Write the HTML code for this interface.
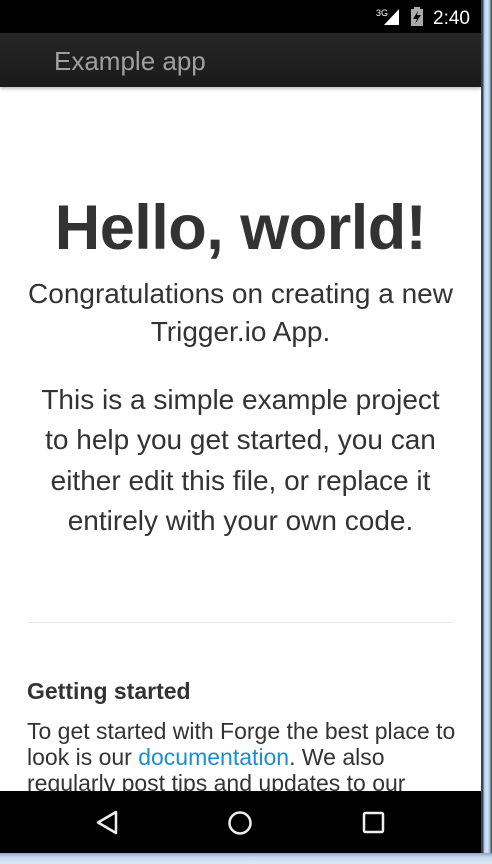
<!DOCTYPE html>
<html><head><meta charset="utf-8"><style>
html,body{margin:0;padding:0;width:492px;height:864px;overflow:hidden;background:#6a7f99;font-family:"Liberation Sans",sans-serif;}
#screen{position:absolute;left:0;top:0;width:481px;height:853px;background:#fff;overflow:hidden;}
#frame{position:absolute;left:481px;top:0;width:11px;height:864px;background:linear-gradient(90deg,#3a4452 0,#3a4452 2px,#aac8e8 3px,#d8e8f8 6px,#9fbbd8 9px,#555 10px);}
#bframe{position:absolute;left:0;top:853px;width:492px;height:11px;background:linear-gradient(180deg,#8aa6c6,#c8daf0 40%,#dfe8f2);}
.status{position:absolute;left:0;top:0;width:481px;height:33px;background:#000;}
.appbar{position:absolute;left:0;top:33px;width:481px;height:54px;background:linear-gradient(#262626,#1a1a1a);box-shadow:0 2px 3px rgba(0,0,0,.25);}
.appbar span{position:absolute;left:54px;top:13px;font-size:26px;color:#a0a0a0;}
.l{position:absolute;left:0;width:481px;text-align:center;color:#333;white-space:nowrap;}
.b{position:absolute;left:27px;color:#333;font-size:23px;white-space:nowrap;}
.nav{position:absolute;left:0;top:791px;width:481px;height:62px;background:#000;}
</style></head><body>
<div id="screen">
<div class="l" style="top:192px;font-size:63px;font-weight:bold;line-height:72px;letter-spacing:-0.5px">Hello, world!</div>
<div class="l" style="top:279px;font-size:28px;line-height:30px">Congratulations on creating a new</div>
<div class="l" style="top:317px;font-size:28px;line-height:30px">Trigger.io App.</div>
<div class="l" style="top:384px;font-size:28px;line-height:32px">This is a simple example project</div>
<div class="l" style="top:424px;font-size:28px;line-height:32px">to help you get started, you can</div>
<div class="l" style="top:465px;font-size:28px;line-height:32px">either edit this file, or replace it</div>
<div class="l" style="top:505px;font-size:28px;line-height:32px">entirely with your own code.</div>
<div style="position:absolute;left:27px;top:622px;width:427px;height:1px;background:#e8e8e8"></div>
<div class="b" style="top:678px;font-weight:bold;line-height:26px">Getting started</div>
<div class="b" style="top:718px;line-height:26px">To get started with Forge the best place to</div>
<div class="b" style="top:744px;line-height:26px">look is our <span style="color:#1a8fd0">documentation</span>. We also</div>
<div class="b" style="top:770px;line-height:26px">regularly post tips and updates to our</div>
<div class="status">
<svg width="481" height="33" style="position:absolute;left:0;top:0">
<text x="376" y="16" fill="#fff" font-size="9" font-family="Liberation Sans">3G</text>
<polygon points="384,25 399,9 399,25" fill="#fff"/>
<rect x="411" y="9" width="12" height="17" fill="#aaa"/>
<rect x="414" y="7" width="6" height="3" fill="#aaa"/>
<polygon points="418,11 413,19 417,19 415,24 421,15 417,15" fill="#000"/>
<text x="433" y="24" fill="#fff" font-size="19" font-family="Liberation Sans">2:40</text>
</svg></div>
<div class="appbar"><span>Example app</span></div>
<div class="nav">
<svg width="481" height="62" style="position:absolute;left:0;top:0">
<polygon points="116,21 116,42 98,31.5" fill="none" stroke="#eee" stroke-width="2.5" stroke-linejoin="round"/>
<circle cx="240" cy="32" r="10.5" fill="none" stroke="#eee" stroke-width="2.5"/>
<rect x="364" y="22" width="19" height="19" rx="1.5" fill="none" stroke="#eee" stroke-width="2.5"/>
</svg></div>
</div>
<div id="frame"></div>
<div id="bframe"></div>
</body></html>
